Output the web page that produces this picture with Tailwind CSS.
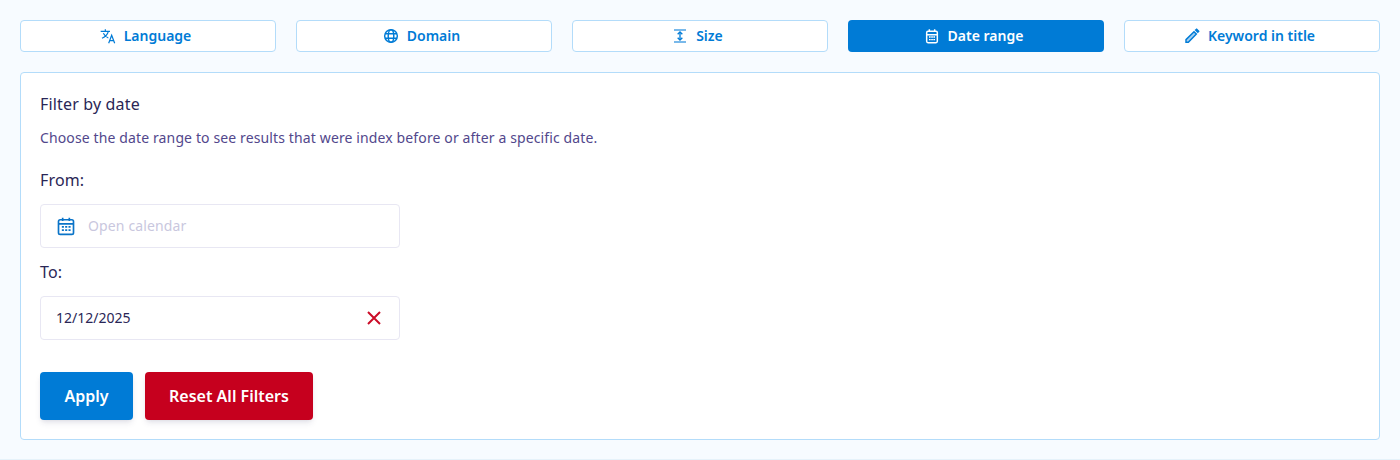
<!DOCTYPE html>
<html lang="en">
<head>
<meta charset="utf-8">
<script src="https://cdn.jsdelivr.net/npm/@tailwindcss/browser@4"></script>
<title>Filter by date</title>
</head>
<body class="m-0 bg-[#f7fbff] font-['Noto_Sans',sans-serif]">
<div class="h-[460px] w-[1400px] border-b border-[#e6f2fa] px-5 pt-5">
  <div class="grid grid-cols-5 gap-5">
    <button class="flex h-8 items-center justify-center gap-2 rounded border border-[#b3dcfa] bg-white pr-[5px] text-sm font-semibold text-[#007bd6]">
      <svg class="size-4" viewBox="0 0 24 24" fill="none" stroke="currentColor" stroke-width="1.800"><path d="M1 5h14M8 2v3M12.500 5c-1 4-4.500 8-9.500 10.500M5 8c1.500 3 4 5.500 7.500 7"/><path d="M13 23l4.500-12 4.500 12M14.500 19h6"/></svg>
      Language
    </button>
    <button class="flex h-8 items-center justify-center gap-2 rounded border border-[#b3dcfa] bg-white pr-[5px] text-sm font-semibold text-[#007bd6]">
      <svg class="size-4" viewBox="0 0 24 24" fill="none" stroke="currentColor" stroke-width="2.200"><circle cx="12" cy="12" r="9.500"/><ellipse cx="12" cy="12" rx="4.200" ry="9.500"/><path d="M3 8.500h18M3 15.500h18"/></svg>
      Domain
    </button>
    <button class="flex h-8 items-center justify-center gap-2 rounded border border-[#b3dcfa] bg-white pr-[5px] text-sm font-semibold text-[#007bd6]">
      <svg class="size-4" viewBox="0 0 24 24" fill="none" stroke="currentColor" stroke-width="2"><path d="M3 3h18M3 21h18" stroke-opacity=".7"/><path d="M12 7v10"/><path d="M8.500 9.500 12 6l3.500 3.500M8.500 14.500 12 18l3.500-3.500"/></svg>
      Size
    </button>
    <button class="flex h-8 items-center justify-center gap-2 rounded bg-[#007bd6] pr-[5px] text-sm font-semibold text-white">
      <svg class="size-4" viewBox="0 0 24 24" fill="none" stroke="currentColor" stroke-width="2.200"><rect x="4" y="5" width="16" height="17" rx="2"/><path d="M4 10h16M8 2v4M16 2v4"/><path d="M7.500 13.500h2.500M10.800 13.500h2.500M14 13.500h2.500M7.500 17.500h2.500M10.800 17.500h2.500M14 17.500h2.500" stroke-width="2"/></svg>
      Date range
    </button>
    <button class="flex h-8 items-center justify-center gap-2 rounded border border-[#b3dcfa] bg-white pr-[5px] text-sm font-semibold text-[#007bd6]">
      <svg class="size-4" viewBox="0 0 24 24" fill="none" stroke="currentColor" stroke-width="2.200"><path d="M3 21.500v-4L15 5.500l3.500 3.500L6.500 21.500H3z" fill="currentColor" fill-opacity=".35"/><path d="M17.500 3 19 1.800l3 3-1.300 1.500z" fill="currentColor"/></svg>
      Keyword in title
    </button>
  </div>
  <div class="mt-5 h-[368px] rounded border border-[#b3dcfa] bg-white px-[19px] pt-[19px]">
    <h2 class="text-base leading-6 font-normal tracking-[0.01em] text-[#2a2656]">Filter by date</h2>
    <p class="mt-[10px] text-sm leading-6 tracking-[0.009em] text-[#52478c]">Choose the date range to see results that were index before or after a specific date.</p>
    <label class="mt-[18px] block text-base leading-6 tracking-[0.01em] text-[#2a2656]">From:</label>
    <div class="mt-3 flex h-11 w-[360px] items-center gap-3 rounded border border-[#e8e7f3] pl-[15px] text-sm tracking-[0.01em] text-[#c9c7de]">
      <svg class="size-5 text-[#0a74c8]" viewBox="0 0 24 24" fill="none" stroke="currentColor" stroke-width="2"><rect x="3" y="4.500" width="18" height="17.500" rx="2"/><path d="M3 9.500h18M8 2v4M16 2v4"/><path d="M7 13h2.500M11 13h2.500M15 13h2.500M7 17h2.500M11 17h2.500M15 17h2.500"/></svg>
      Open calendar
    </div>
    <label class="mt-3 block text-base leading-6 tracking-[0.01em] text-[#2a2656]">To:</label>
    <div class="mt-3 flex h-11 w-[360px] items-center justify-between rounded border border-[#e8e7f3] pr-[17px] pl-[15px] text-sm text-[#2a2656]">
      12/12/2025
      <svg class="size-4 text-[#cb0c28]" viewBox="0 0 16 16" fill="none" stroke="currentColor" stroke-width="2"><path d="M2 2l12 12M14 2 2 14"/></svg>
    </div>
    <div class="mt-8 flex gap-3">
      <button class="h-12 w-[93px] rounded bg-[#007bd6] text-base font-semibold text-white shadow-md shadow-[#2b2357]/10">Apply</button>
      <button class="h-12 w-[168px] rounded bg-[#c6001e] text-base font-semibold text-white shadow-md shadow-[#2b2357]/10">Reset All Filters</button>
    </div>
  </div>
</div>
</body>
</html>
